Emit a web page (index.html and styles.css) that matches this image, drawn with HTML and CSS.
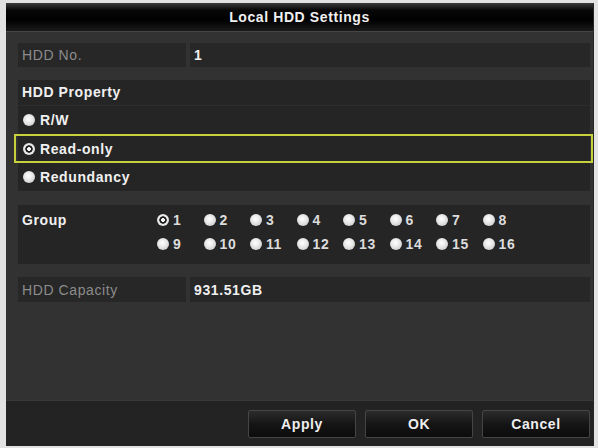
FILE: index.html
```html
<!DOCTYPE html>
<html lang="en">
<head>
    <meta charset="UTF-8">
    <meta name="viewport" content="width=device-width, initial-scale=1.0">
    <title>Local HDD Settings</title>
    <link rel="stylesheet" href="styles.css">
</head>
<body>
    <div class="dialog">
        <div class="title">Local HDD Settings</div>
        <div class="content">
            <div class="field-row">
                <div class="cell label">HDD No.</div>
                <div class="cell value">1</div>
            </div>

            <div class="panel">
                <div class="panel-head">HDD Property</div>
                <div class="option"><span class="radio"></span>R/W</div>
                <div class="option focus"><span class="radio on"></span>Read-only</div>
                <div class="option"><span class="radio"></span>Redundancy</div>
            </div>

            <div class="panel group">
                <div class="group-label">Group</div>
                <div class="num"><span class="radio on"></span>1</div>
                <div class="num"><span class="radio"></span>2</div>
                <div class="num"><span class="radio"></span>3</div>
                <div class="num"><span class="radio"></span>4</div>
                <div class="num"><span class="radio"></span>5</div>
                <div class="num"><span class="radio"></span>6</div>
                <div class="num"><span class="radio"></span>7</div>
                <div class="num"><span class="radio"></span>8</div>
                <div class="num"><span class="radio"></span>9</div>
                <div class="num"><span class="radio"></span>10</div>
                <div class="num"><span class="radio"></span>11</div>
                <div class="num"><span class="radio"></span>12</div>
                <div class="num"><span class="radio"></span>13</div>
                <div class="num"><span class="radio"></span>14</div>
                <div class="num"><span class="radio"></span>15</div>
                <div class="num"><span class="radio"></span>16</div>
            </div>

            <div class="field-row capacity">
                <div class="cell label">HDD Capacity</div>
                <div class="cell value">931.51GB</div>
            </div>
        </div>
        <div class="footer">
            <button class="btn">Apply</button>
            <button class="btn">OK</button>
            <button class="btn">Cancel</button>
        </div>
    </div>
</body>
</html>
```

FILE: styles.css
```css
body {
    margin: 0;
    padding: 3px 4px 2px 6px;
    background: #e2e2e2;
    font-family: "Liberation Sans", Arial, sans-serif;
    font-size: 14px;
    letter-spacing: 0.6px;
    color: #f0f0f0;
}
.dialog {
    width: 588px;
    height: 443px;
    background: #323232;
    display: flex;
    flex-direction: column;
    border-right: 1px solid #262626;
    box-sizing: border-box;
}
.title {
    height: 28px;
    line-height: 28px;
    text-align: center;
    font-weight: bold;
    background: linear-gradient(#3c3c3c, #080808 25%, #000 60%, #1a1a1a);
    border-bottom: 1px solid #464646;
}
.content {
    flex: 1;
    padding: 11px 3px 0 12px;
    display: flex;
    flex-direction: column;
}
.field-row {
    display: flex;
    gap: 4px;
    height: 24px;
}
.cell {
    background: #272727;
    display: flex;
    align-items: center;
    padding-left: 4px;
}
.label {
    width: 164px;
    color: #8c8c8c;
}
.value {
    flex: 1;
    font-weight: bold;
}
.panel {
    margin-top: 13px;
    background: #252525;
}
.panel-head {
    height: 25px;
    line-height: 25px;
    padding-left: 4px;
    font-weight: bold;
    border-bottom: 1px solid #2d2d2d;
}
.option {
    height: 28px;
    display: flex;
    align-items: center;
    gap: 5px;
    padding-left: 5px;
    font-weight: bold;
}
.option.focus {
    height: 25px;
    border: 2px solid #c6d13b;
    margin: 0 -3px 0 -4px;
    padding-left: 7px;
}
.radio {
    width: 12px;
    height: 12px;
    border-radius: 50%;
    flex-shrink: 0;
    background: radial-gradient(circle at 45% 40%, #ffffff, #e6e6e6 45%, #bcbcbc);
}
.radio.on {
    background: radial-gradient(circle, #f4f4f4 0 1.6px, #1c1c1c 2.2px 3.4px, #f0f0f0 4px, #c4c4c4);
}
.group {
    margin-top: 14px;
    padding: 3px 0 8px 4px;
    display: grid;
    grid-template-columns: 135px repeat(8, 46.5px);
    grid-auto-rows: 24px;
}
.group-label {
    grid-row: span 2;
    line-height: 24px;
    font-weight: bold;
}
.num {
    display: flex;
    align-items: center;
    gap: 4px;
    font-weight: bold;
    color: #dcdcdc;
}
.capacity {
    margin-top: 13px;
    height: 25px;
}
.footer {
    height: 45px;
    background: #232323;
    border-top: 1px solid #383838;
    display: flex;
    justify-content: flex-end;
    align-items: center;
    gap: 9px;
    padding-right: 3px;
}
.btn {
    width: 108px;
    height: 28px;
    font-family: inherit;
    font-size: 14px;
    font-weight: bold;
    letter-spacing: 0.6px;
    color: #eeeeee;
    background: linear-gradient(#2c2c2c, #151515 50%, #0c0c0c);
    border: 1px solid #454545;
    border-radius: 2px;
    cursor: pointer;
}
```
